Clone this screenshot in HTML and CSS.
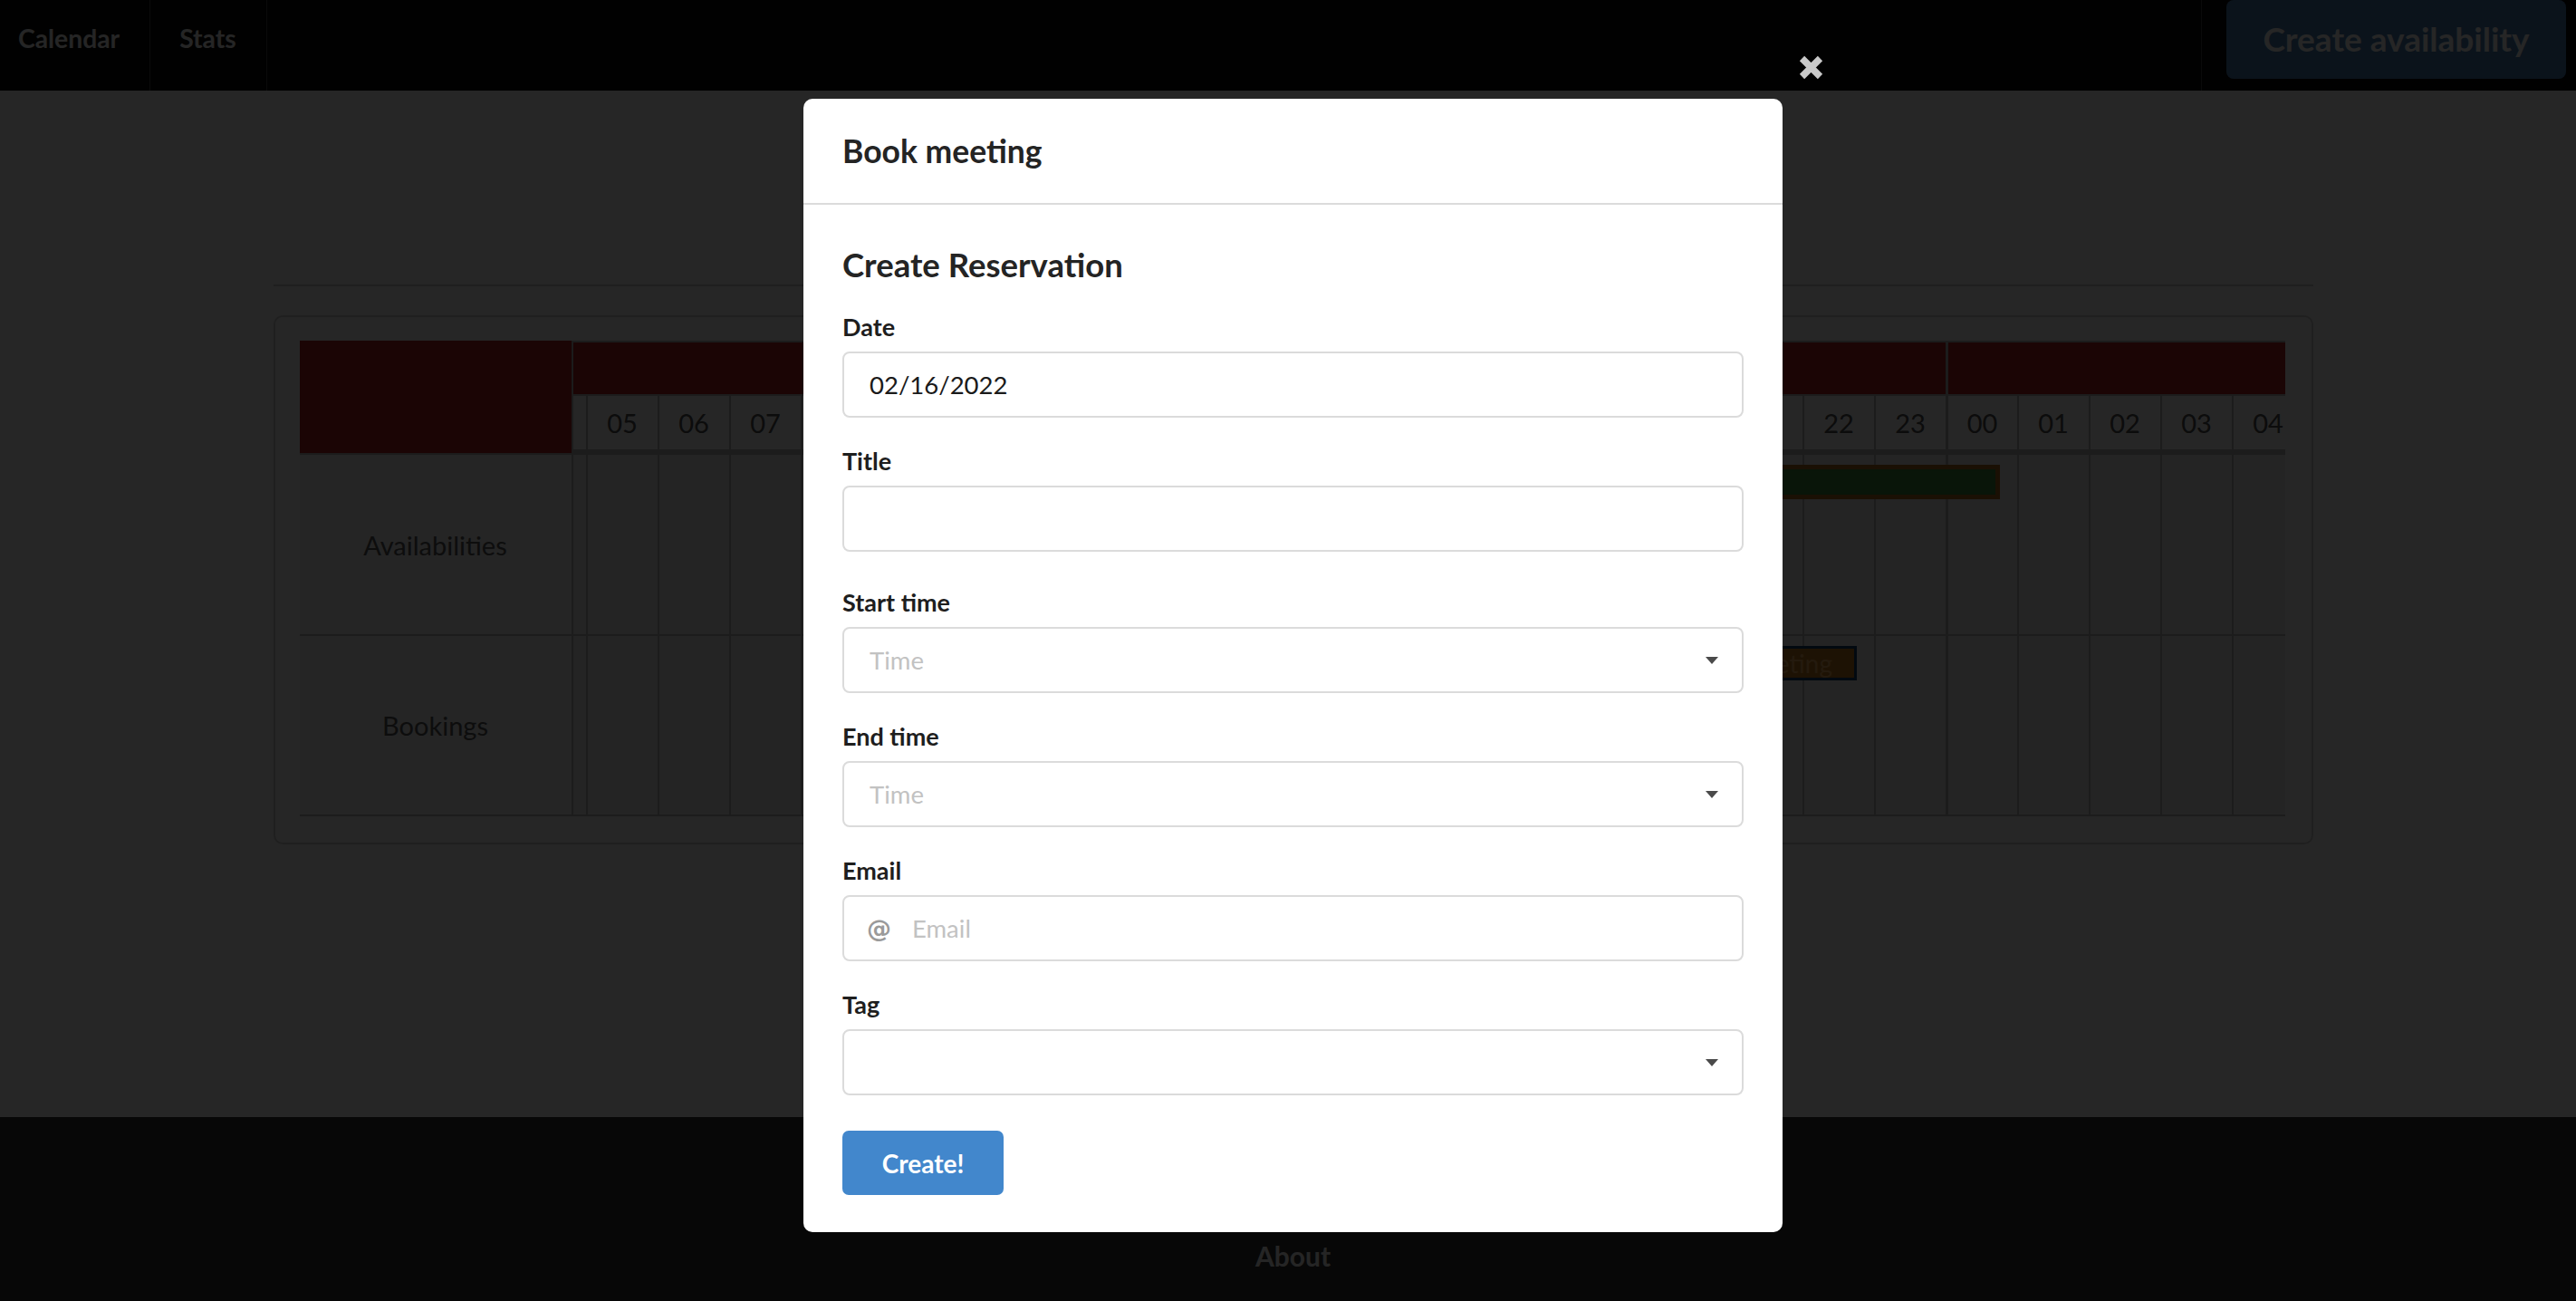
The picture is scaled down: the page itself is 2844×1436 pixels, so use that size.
FILE: index.html
```html
<!DOCTYPE html>
<html lang="en">
<head>
<meta charset="utf-8">
<title>Calendar</title>
<link rel="stylesheet" href="styles.css">
</head>
<body>
<div class="page">
  <nav class="navbar">
    <div class="nav-start">
      <a class="nav-item nav-item-first">Calendar</a>
      <a class="nav-item">Stats</a>
    </div>
    <div class="nav-end">
      <a class="btn-availability">Create availability</a>
    </div>
  </nav>

  <main class="main">
    <div class="container">
      <hr class="divider">
      <div class="box">
        <div class="schedule">
          <div class="labels">
            <div class="label-head"></div>
            <div class="label-cell label-avail">Availabilities</div>
            <div class="label-cell label-book">Bookings</div>
          </div>
          <div class="timeline">
            <div class="grid">
              <div class="day-bar day-one"></div>
              <div class="day-bar day-two"></div>

              <div class="hour"></div>
              <div class="hour">05</div><div class="hour">06</div><div class="hour">07</div><div class="hour">08</div>
              <div class="hour">09</div><div class="hour">10</div><div class="hour">11</div><div class="hour">12</div>
              <div class="hour">13</div><div class="hour">14</div><div class="hour">15</div><div class="hour">16</div>
              <div class="hour">17</div><div class="hour">18</div><div class="hour">19</div><div class="hour">20</div>
              <div class="hour">21</div><div class="hour">22</div><div class="hour">23</div>
              <div class="hour day-start">00</div><div class="hour">01</div><div class="hour">02</div><div class="hour">03</div><div class="hour">04</div>

              <div class="slot avail"></div>
              <div class="slot avail"></div><div class="slot avail"></div><div class="slot avail"></div><div class="slot avail"></div>
              <div class="slot avail"></div><div class="slot avail"></div><div class="slot avail"></div><div class="slot avail"></div>
              <div class="slot avail"></div><div class="slot avail"></div><div class="slot avail"></div><div class="slot avail"></div>
              <div class="slot avail"></div><div class="slot avail"></div><div class="slot avail"></div><div class="slot avail"></div>
              <div class="slot avail"></div><div class="slot avail"></div><div class="slot avail"></div>
              <div class="slot avail day-start"></div><div class="slot avail"></div><div class="slot avail"></div><div class="slot avail"></div><div class="slot avail"></div>

              <div class="slot"></div>
              <div class="slot"></div><div class="slot"></div><div class="slot"></div><div class="slot"></div>
              <div class="slot"></div><div class="slot"></div><div class="slot"></div><div class="slot"></div>
              <div class="slot"></div><div class="slot"></div><div class="slot"></div><div class="slot"></div>
              <div class="slot"></div><div class="slot"></div><div class="slot"></div><div class="slot"></div>
              <div class="slot"></div><div class="slot"></div><div class="slot"></div>
              <div class="slot day-start"></div><div class="slot"></div><div class="slot"></div><div class="slot"></div><div class="slot"></div>

              <div class="event event-availability" style="left:1201px;top:135px;width:374px;"></div>
              <div class="event event-booking" style="left:1277px;top:335px;width:140px;">Meeting</div>
            </div>
          </div>
        </div>
      </div>
    </div>
  </main>

  <footer class="footer">
    <a class="footer-link">About</a>
  </footer>

  <div class="modal">
    <div class="modal-background"></div>
    <div class="modal-card">
      <header class="modal-head">
        <p class="modal-title">Book meeting</p>
      </header>
      <section class="modal-body">
        <h2 class="form-title">Create Reservation</h2>
        <div class="field">
          <label class="label">Date</label>
          <input class="input" type="text" value="02/16/2022">
        </div>
        <div class="field field-title">
          <label class="label">Title</label>
          <input class="input" type="text">
        </div>
        <div class="field">
          <label class="label">Start time</label>
          <div class="select-wrap">
            <select class="select is-placeholder"><option>Time</option></select>
            <svg class="caret" width="14" height="8" viewBox="0 0 14 8"><path d="M0 0 H14 L7 8 Z" fill="#4a4a4a"/></svg>
          </div>
        </div>
        <div class="field">
          <label class="label">End time</label>
          <div class="select-wrap">
            <select class="select is-placeholder"><option>Time</option></select>
            <svg class="caret" width="14" height="8" viewBox="0 0 14 8"><path d="M0 0 H14 L7 8 Z" fill="#4a4a4a"/></svg>
          </div>
        </div>
        <div class="field">
          <label class="label">Email</label>
          <div class="control-icon">
            <input class="input input-with-icon" type="email" placeholder="Email">
            <span class="icon-at">@</span>
          </div>
        </div>
        <div class="field field-last">
          <label class="label">Tag</label>
          <div class="select-wrap">
            <select class="select"><option></option></select>
            <svg class="caret" width="14" height="8" viewBox="0 0 14 8"><path d="M0 0 H14 L7 8 Z" fill="#4a4a4a"/></svg>
          </div>
        </div>
        <button class="btn-create">Create!</button>
      </section>
      <button class="modal-close" aria-label="close">
        <svg width="27" height="27" viewBox="0 0 27 27"><path d="M3.5 3.5 L23.5 23.5 M23.5 3.5 L3.5 23.5" stroke="#c9c9c9" stroke-width="7.5" stroke-linecap="butt"/></svg>
      </button>
    </div>
  </div>
</div>
</body>
</html>
```

FILE: styles.css
```css
* { box-sizing: border-box; }

html, body {
  margin: 0;
  padding: 0;
  overflow: hidden;
}

body {
  font-family: Lato, "Open Sans", "Liberation Sans", sans-serif;
  background: #0a0a0a;
}

.page {
  position: relative;
  width: 2855px;
  height: 1436px;
  display: flex;
  flex-direction: column;
}

/* ---------- navbar ---------- */
.navbar {
  flex: none;
  height: 100px;
  background: #0a0a0a;
  display: flex;
  justify-content: space-between;
}

.nav-start {
  display: flex;
}

.nav-item {
  display: flex;
  align-items: center;
  padding: 0 33px 16px 32px;
  color: #f5f5f5;
  font-size: 28.3px;
  font-weight: 700;
  text-decoration: none;
  border-right: 1px solid #444;
}

.nav-item-first {
  padding-left: 20px;
}

.nav-end {
  display: flex;
  align-items: flex-start;
  padding: 0 22px 0 27px;
  border-left: 1px solid #444;
}

.btn-availability {
  width: 375px;
  height: 87px;
  display: flex;
  align-items: center;
  justify-content: center;
  padding-bottom: 3px;
  background: #4a80b6;
  color: #fafafa;
  font-size: 37px;
  font-weight: 700;
  border-radius: 8px;
  text-decoration: none;
}

/* ---------- main ---------- */
.main {
  flex: 1;
  background: #ffffff;
}

.container {
  width: 2252px;
  margin: 0 auto;
  padding-top: 214px;
}

.divider {
  margin: 0;
  border: none;
  height: 2px;
  background: #d2d2d2;
}

.box {
  margin-top: 32px;
  border: 2px solid #d0d0d0;
  border-radius: 10px;
  padding: 26px 29px 29px 27px;
}

.schedule {
  display: flex;
}

.labels {
  width: 302px;
  flex: none;
  border-right: 2px solid #bbbbbb;
  display: flex;
  flex-direction: column;
}

.label-head {
  height: 126px;
  background: #b22222;
  border-bottom: 2px solid #bbbbbb;
}

.label-cell {
  display: flex;
  align-items: center;
  justify-content: center;
  font-size: 29px;
  color: #5a5a5a;
  background: #f4f4f4;
  border-bottom: 2px solid #bbbbbb;
}

.label-avail { height: 200px; }
.label-book { height: 199px; }

.timeline {
  width: 1890px;
  overflow: hidden;
  background: #bbbbbb;
  padding: 2px 0;
}

.grid {
  position: relative;
  display: grid;
  grid-template-columns: 14px repeat(24, 77px);
  grid-template-rows: 57px 63px 198px 197px;
  column-gap: 2px;
  row-gap: 2px;
  width: max-content;
}

.day-bar {
  background: #b22222;
}

.day-one { grid-column: 1 / span 20; }
.day-two { grid-column: 21 / span 5; margin-left: 1px; }

.hour {
  margin-bottom: 4px;
  background: #ffffff;
  display: flex;
  align-items: center;
  justify-content: center;
  font-size: 29px;
  color: #4f4f4f;
}

.slot {
  background: #f2f2f2;
}

.day-start {
  margin-left: 1px;
}

.event {
  position: absolute;
  height: 38px;
}

.event-availability {
  background: #3f8a3f;
  border: 5px solid #b06f1c;
  border-left: none;
}

.event-booking {
  background: #c07a1c;
  border: 3px solid #0f3e6a;
  color: #f0b060;
  font-size: 28px;
  line-height: 32px;
  padding-left: 8px;
  overflow: hidden;
}

/* ---------- footer ---------- */
.footer {
  flex: none;
  height: 203px;
  background: #2f2f2f;
  display: flex;
  justify-content: center;
  padding-top: 133px;
}

.footer-link {
  color: #f7f7f7;
  font-size: 30px;
  font-weight: 700;
  line-height: 40px;
  height: 40px;
}

/* ---------- modal ---------- */
.modal {
  position: absolute;
  inset: 0;
  display: flex;
  justify-content: center;
  align-items: flex-start;
  padding-top: 109px;
}

.modal-background {
  position: absolute;
  inset: 0;
  background: rgba(0, 0, 0, 0.85);
}

.modal-card {
  position: relative;
  width: 1081px;
  background: #ffffff;
  border-radius: 10px;
}

.modal-head {
  height: 117px;
  padding: 0 43px;
  display: flex;
  align-items: center;
  border-bottom: 2px solid #dbdbdb;
}

.modal-title {
  margin: 0;
  font-size: 35.5px;
  font-weight: 700;
  color: #242424;
}

.modal-body {
  padding: 46px 43px 41px;
}

.form-title {
  margin: 0 0 31px;
  font-size: 36.5px;
  line-height: 40px;
  font-weight: 700;
  color: #242424;
}

.field {
  margin-bottom: 30px;
}

.field-title {
  margin-bottom: 38px;
}

.field-last {
  margin-bottom: 39px;
}

.label {
  display: block;
  font-size: 27px;
  line-height: 36px;
  font-weight: 700;
  color: #1e1e1e;
  margin-bottom: 9px;
}

.input,
.select {
  display: block;
  width: 100%;
  height: 73px;
  margin: 0;
  border: 2px solid #dbdbdb;
  border-radius: 8px;
  background: #ffffff;
  padding: 0 28px;
  font-family: Lato, "Open Sans", sans-serif;
  font-size: 27.5px;
  color: #1a1a1a;
  outline: none;
}

.input::placeholder {
  color: #c2c2c2;
}

.select {
  appearance: none;
  -webkit-appearance: none;
}

.select.is-placeholder {
  color: #c2c2c2;
}

.select-wrap,
.control-icon {
  position: relative;
}

.caret {
  position: absolute;
  right: 28px;
  top: 33px;
}

.input-with-icon {
  padding-left: 75px;
}

.icon-at {
  position: absolute;
  left: 27px;
  top: 0;
  height: 73px;
  display: flex;
  align-items: center;
  font-family: "DejaVu Sans", sans-serif;
  font-weight: 700;
  font-size: 27px;
  color: #9a9a9a;
}

.btn-create {
  display: block;
  width: 178px;
  height: 71px;
  border: none;
  border-radius: 7px;
  background: #4287cc;
  color: #ffffff;
  font-family: Lato, "Open Sans", sans-serif;
  font-size: 28px;
  font-weight: 700;
  padding: 0;
}

.modal-close {
  position: absolute;
  left: calc(100% + 18px);
  top: -48px;
  width: 27px;
  height: 27px;
  padding: 0;
  border: none;
  background: none;
  display: block;
}

.modal-close svg {
  display: block;
}
```
